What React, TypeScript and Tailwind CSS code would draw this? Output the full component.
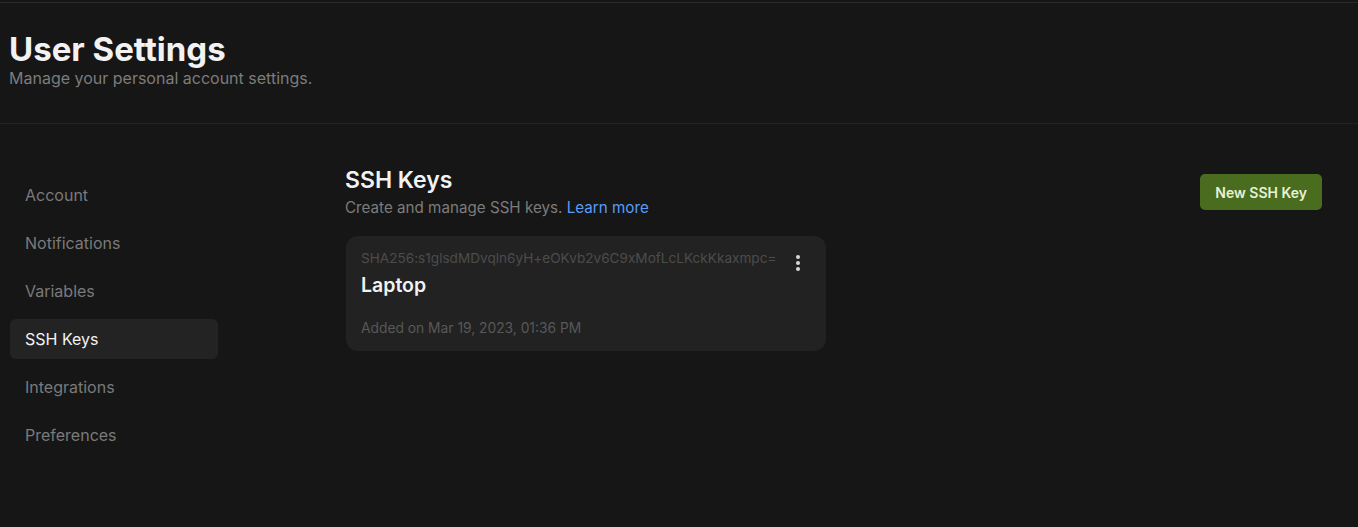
import React from "react";

const navItems = ["Account", "Notifications", "Variables", "SSH Keys", "Integrations", "Preferences"];

export default function App() {
  return (
    <div className="w-[1358px] h-[527px] overflow-hidden bg-[#161616] text-white" style={{ fontFamily: "Inter, 'Noto Sans', sans-serif" }}>
      <div className="h-[3px] border-b border-[#2a2a2a]" />
      <div className="px-[9px] pt-[26px] pb-[35px] border-b border-[#222222]">
        <h1 className="text-[33px] leading-[40px] font-bold text-[#f2f2f2]">User Settings</h1>
        <p className="text-[16px] leading-[20px] text-[#7c7c7c] mt-[-1px]">Manage your personal account settings.</p>
      </div>
      <div className="flex">
        <nav className="w-[208px] ml-[10px] pt-[51px] flex flex-col gap-[8px]">
          {navItems.map((item) => (
            <div
              key={item}
              className={
                "h-[40px] px-[15px] flex items-center rounded-[6px] text-[16px] " +
                (item === "SSH Keys" ? "bg-[#232323] text-[#f2f2f2]" : "text-[#7a7a7a]")
              }
            >
              {item}
            </div>
          ))}
        </nav>
        <main className="flex-1 ml-[127px] mr-[36px] pt-[42px]">
          <div className="flex justify-between items-start">
            <div>
              <h2 className="text-[23px] leading-[28px] font-semibold text-[#f2f2f2]">SSH Keys</h2>
              <p className="text-[15.2px] leading-[22px] text-[#7c7c7c] mt-[3px]">
                Create and manage SSH keys. <span className="text-[#5a9cf8]">Learn more</span>
              </p>
            </div>
            <button className="mt-[8px] h-[36px] px-[15px] rounded-[5px] bg-[#4a6c1f] text-[#e6f2d6] text-[14px] font-semibold">
              New SSH Key
            </button>
          </div>
          <div className="mt-[17px] w-[480px] h-[115px] rounded-[12px] bg-[#222222] ml-[1px] pl-[15px] pr-[16px] pt-[13px] relative">
            <div className="text-[13.6px] leading-[18px] text-[#4c4c4c]">SHA256:s1glsdMDvqln6yH+eOKvb2v6C9xMofLcLKckKkaxmpc=</div>
            <div className="mt-[6px] text-[19.5px] leading-[24px] font-semibold text-[#f2f2f2]">Laptop</div>
            <div className="mt-[22px] text-[13.8px] leading-[18px] text-[#585858]">Added on Mar 19, 2023, 01:36 PM</div>
            <svg className="absolute right-[22px] top-[18px]" width="12" height="18" viewBox="0 0 12 18">
              <circle cx="6" cy="3" r="2" fill="#d8d8d8" />
              <circle cx="6" cy="9" r="2" fill="#d8d8d8" />
              <circle cx="6" cy="15" r="2" fill="#d8d8d8" />
            </svg>
          </div>
        </main>
      </div>
    </div>
  );
}
